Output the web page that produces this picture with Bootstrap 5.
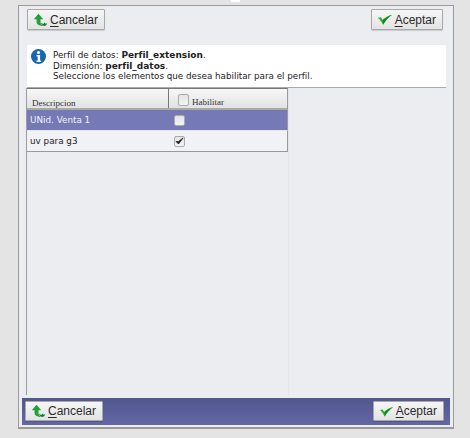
<!DOCTYPE html>
<html lang="es">
<head>
  <meta charset="UTF-8" />
  <title>Perfil de datos</title>
  <link href="https://cdn.jsdelivr.net/npm/bootstrap@5.3.2/dist/css/bootstrap.min.css" rel="stylesheet"/>
  <style>
    html, body { height: 100%; }
    body {
      background: #e4e4e4;
      padding: 5px 16px 9px 18px;
      font-family: "DejaVu Sans", sans-serif;
      font-size: 8.75px;
      color: #222;
      overflow: hidden;
    }
    .top-sliver { position: absolute; left: 231px; top: 0; width: 9px; height: 2px; background: #fff; }
    .dlg {
      height: 100%;
      background: #ecedf1;
      border: 1px solid #9a9a9a;
      border-bottom-width: 2px;
      display: flex;
      flex-direction: column;
    }
    .top-bar { padding: 3px 10px 0 8px; height: 39px; }
    .xbtn {
      height: 21px;
      padding: 0 6px 0 5px;
      gap: 2px;
      font: 12px/1 "Liberation Sans", sans-serif;
      color: #2a2a2a;
      background: linear-gradient(#f6f6f6, #e3e3e3);
      border: 1px solid #a8a8a8;
      border-radius: 1px;
      box-shadow: 0 1px 1px rgba(0,0,0,.15);
    }
    .btn-cancel { width: 78px; }
    .btn-ok { width: 72px; }
    .info-box {
      margin: 0 7px 0 8px;
      height: 43px;
      background: #fff;
      border-bottom: 1px solid #aaa;
      padding: 4px 0 0 4px;
      gap: 7px;
      line-height: 10.5px;
    }
    .info-box b { font-size: 9px; }
    .info-txt { padding-top: 1px; white-space: nowrap; }
    .grid-wrap {
      flex: 1;
      margin-left: 7px;
      width: 263px;
      border-left: 1px solid #9c9c9c;
      border-right: 1px solid #e6e6ea;
      margin-bottom: 3px;
    }
    .grid-head {
      height: 22px;
      background: linear-gradient(#f7f7f7, #e2e2e2);
      border-top: 1px solid #777;
      border-bottom: 2px solid #a9a9a9;
      font: 9px/1 "Liberation Serif", serif;
      color: #333;
    }
    .grid-row { height: 21px; font-size: 8.8px; border-bottom: 1px solid #e8e8ec; }
    .grid-row.sel { background: #7579b6; color: #f2f2f8; }
    .grid-row.last { background: #f1f2f5; border-bottom: 1px solid #9a9a9a; }
    .grid-head, .grid-row { border-right: 1px solid #9a9a9a; width: 261px; }
    .col-desc { width: 142px; padding-left: 3px; padding-top: 1px; height: 100%; }
    .col-hab { height: 100%; }
    .grid-head .col-desc { border-right: 1px solid #777; padding-left: 5px; padding-top: 0; align-items: flex-end; }
    .grid-head .col-hab { padding-left: 9px; padding-bottom: 1px; gap: 3px; align-items: flex-end; }
    .grid-row .col-hab { padding-left: 5px; }
    .chk {
      width: 11px; height: 11px;
      background: linear-gradient(#e4e4e4, #f4f4f4);
      border: 1px solid #aaa;
      border-radius: 2px;
    }
    .chk.big { width: 11px; height: 12px; margin-bottom: 1px; }
    .foot-bar {
      margin: 0 3px 2px;
      height: 27px;
      background: linear-gradient(#52578e, #6367a6);
      padding: 3px 6px 0 3px;
    }
    .foot-bar .xbtn { height: 20px; }
    .foot-bar .btn-ok { width: 71px; }
    u { text-underline-offset: 2px; }
  </style>
</head>
<body>
  <div class="top-sliver"></div>
  <div class="dlg">
    <div class="top-bar d-flex justify-content-between align-items-start">
      <button class="xbtn btn-cancel d-flex align-items-center">
        <svg width="19" height="16" viewBox="0 0 19 16"><path d="M7 0 1 7h3.500v3.500C4.500 13.500 8 15.500 11 15.500h2c-2-1-3.500-3-3.500-5V7H13z" fill="#22a03a"/><path d="M10 11c.5 2.500 2.500 4.500 4 4.500 2 0 3.500-1.500 4-3.500l-2 .8c-.5-1-1-1.500-2-1.300l-.5 1.500c-1.500 0-2.500-.5-3.500-2z" fill="#137a2a"/></svg>
        <span><u>C</u>ancelar</span>
      </button>
      <button class="xbtn btn-ok d-flex align-items-center">
        <svg width="18" height="13" viewBox="0 0 18 13"><path d="M1 4.500 4.500 4l2 3C9.500 4 13 2 17.500 1 13 4 9.500 8 7 12.500 5.500 9.500 3.500 6.500 1 4.500z" fill="#27b534"/><path d="M7 12.500C9.500 8 13 4 17.500 1 12.500 3 9 5.500 6.500 7z" fill="#128a22"/></svg>
        <span><u>A</u>ceptar</span>
      </button>
    </div>
    <div class="info-box d-flex align-items-start">
      <svg width="15" height="15" viewBox="0 0 15 15" class="flex-shrink-0"><circle cx="7.500" cy="7.500" r="7.500" fill="#1467b0"/><circle cx="7.500" cy="3.500" r="1.600" fill="#fff"/><path d="M5.500 6h3.600v5.500h1V13H5.500v-1.500h1.200V7.500H5.500z" fill="#fff"/></svg>
      <div class="info-txt">
        <div>Perfil de datos: <b>Perfil_extension</b>.</div>
        <div>Dimensión: <b>perfil_datos</b>.</div>
        <div>Seleccione los elementos que desea habilitar para el perfil.</div>
      </div>
    </div>
    <div class="grid-wrap">
      <div class="grid-head d-flex">
        <div class="col-desc d-flex">Descripcion</div>
        <div class="col-hab d-flex"><span class="chk big d-block"></span><span>Habilitar</span></div>
      </div>
      <div class="grid-row sel d-flex align-items-center">
        <div class="col-desc d-flex align-items-center">UNid. Venta 1</div>
        <div class="col-hab d-flex align-items-center"><span class="chk d-block"></span></div>
      </div>
      <div class="grid-row last d-flex align-items-center">
        <div class="col-desc d-flex align-items-center">uv para g3</div>
        <div class="col-hab d-flex align-items-center">
          <span class="chk d-flex align-items-center justify-content-center"><svg width="9" height="8" viewBox="0 0 9 8"><path d="M1 4.500 3.500 7 8 1 3.500 4.500z" fill="#222" stroke="#222" stroke-width=".8"/></svg></span>
        </div>
      </div>
    </div>
    <div class="foot-bar d-flex justify-content-between align-items-start">
      <button class="xbtn btn-cancel d-flex align-items-center">
        <svg width="19" height="16" viewBox="0 0 19 16"><path d="M7 0 1 7h3.500v3.500C4.500 13.500 8 15.500 11 15.500h2c-2-1-3.500-3-3.500-5V7H13z" fill="#22a03a"/><path d="M10 11c.5 2.500 2.500 4.500 4 4.500 2 0 3.500-1.500 4-3.500l-2 .8c-.5-1-1-1.500-2-1.300l-.5 1.500c-1.500 0-2.500-.5-3.500-2z" fill="#137a2a"/></svg>
        <span><u>C</u>ancelar</span>
      </button>
      <button class="xbtn btn-ok d-flex align-items-center">
        <svg width="18" height="13" viewBox="0 0 18 13"><path d="M1 4.500 4.500 4l2 3C9.500 4 13 2 17.500 1 13 4 9.500 8 7 12.500 5.500 9.500 3.500 6.500 1 4.500z" fill="#27b534"/><path d="M7 12.500C9.500 8 13 4 17.500 1 12.500 3 9 5.500 6.500 7z" fill="#128a22"/></svg>
        <span><u>A</u>ceptar</span>
      </button>
    </div>
  </div>
  <script src="https://cdn.jsdelivr.net/npm/bootstrap@5.3.2/dist/js/bootstrap.bundle.min.js"></script>
</body>
</html>
